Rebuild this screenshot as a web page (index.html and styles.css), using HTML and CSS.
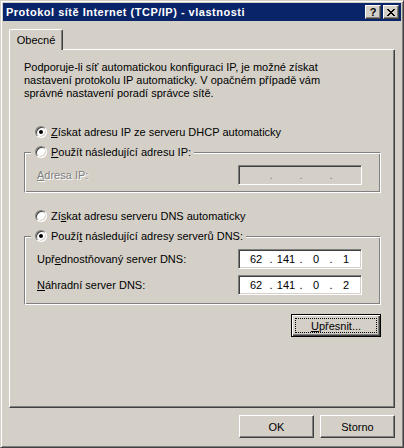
FILE: index.html
```html
<!DOCTYPE html>
<html lang="cs">
<head>
    <meta charset="UTF-8">
    <title>Protokol sítě Internet (TCP/IP) - vlastnosti</title>
    <link rel="stylesheet" href="styles.css">
</head>
<body>
    <div class="window">
        <div class="titlebar">
            <span class="title">Protokol sítě Internet (TCP/IP) - vlastnosti</span>
            <span class="cap-btn help">?</span>
            <span class="cap-btn close">
                <svg width="8" height="7" viewBox="0 0 8 7" shape-rendering="crispEdges">
                    <path d="M0 0h2v1H0zM6 0h2v1H6zM1 1h2v1H1zM5 1h2v1H5zM2 2h4v1H2zM3 3h2v1H3zM2 4h4v1H2zM1 5h2v1H1zM5 5h2v1H5zM0 6h2v1H0zM6 6h2v1H6z" fill="#000"/>
                </svg>
            </span>
        </div>

        <div class="client">
            <!-- Tabs -->
            <div class="tabs">
                <div class="tab">Obecné</div>
                <div class="tab-fill"></div>
            </div>

            <div class="panel">
                <p class="intro">Podporuje-li síť automatickou konfiguraci IP, je možné získat<br>nastavení protokolu IP automaticky. V opačném případě vám<br>správné nastavení poradí správce sítě.</p>

                <div class="option first"><span class="radio checked"></span><span><u>Z</u>ískat adresu IP ze serveru DHCP automaticky</span></div>

                <div class="group">
                    <div class="group-head"><span class="radio"></span><span><u>P</u>oužít následující adresu IP:</span></div>
                    <div class="row">
                        <span class="label disabled"><u>A</u>dresa IP:</span>
                        <span class="ip off">
                            <span class="oct"></span><span class="dot">.</span>
                            <span class="oct"></span><span class="dot">.</span>
                            <span class="oct"></span><span class="dot">.</span>
                            <span class="oct"></span>
                        </span>
                    </div>
                </div>

                <div class="option third"><span class="radio"></span><span>Zí<u>s</u>kat adresu serveru DNS automaticky</span></div>

                <div class="group dns">
                    <div class="group-head"><span class="radio checked"></span><span>Použí<u>t</u> následující adresy serverů DNS:</span></div>
                    <div class="row">
                        <span class="label">Upř<u>e</u>dnostňovaný server DNS:</span>
                        <span class="ip">
                            <span class="oct">62</span><span class="dot">.</span>
                            <span class="oct">141</span><span class="dot">.</span>
                            <span class="oct">0</span><span class="dot">.</span>
                            <span class="oct">1</span>
                        </span>
                    </div>
                    <div class="row second">
                        <span class="label"><u>N</u>áhradní server DNS:</span>
                        <span class="ip">
                            <span class="oct">62</span><span class="dot">.</span>
                            <span class="oct">141</span><span class="dot">.</span>
                            <span class="oct">0</span><span class="dot">.</span>
                            <span class="oct">2</span>
                        </span>
                    </div>
                </div>

                <div class="btn default"><span class="focus"><u>U</u>přesnit...</span></div>
            </div>

            <div class="footer">
                <div class="btn">OK</div>
                <div class="btn">Storno</div>
            </div>
        </div>
    </div>
</body>
</html>
```

FILE: styles.css
```css
body {
    margin: 0;
    font-family: "Liberation Sans", Arial, sans-serif;
    font-size: 11px;
    color: #000;
    background: #d4d0c8;
}

.window {
    width: 404px;
    height: 448px;
    box-sizing: border-box;
    display: flex;
    flex-direction: column;
    padding: 2px;
    background: #d4d0c8;
    border: 1px solid;
    border-color: #d4d0c8 #404040 #404040 #d4d0c8;
    box-shadow: inset 1px 1px #fff, inset -1px -1px #808080;
}

/* Title bar */
.titlebar {
    height: 18px;
    display: flex;
    align-items: center;
    gap: 2px;
    padding: 0 2px 0 3px;
    background: #0a246a;
    color: #fff;
    font-weight: bold;
}

.title {
    flex: 1;
    white-space: nowrap;
    letter-spacing: 0.5px;
}

.cap-btn {
    width: 16px;
    height: 14px;
    box-sizing: border-box;
    display: flex;
    align-items: center;
    justify-content: center;
    background: #d4d0c8;
    color: #000;
    border: 1px solid;
    border-color: #fff #404040 #404040 #fff;
    box-shadow: inset -1px -1px #808080;
}

.cap-btn.help {
    font-size: 11px;
    line-height: 12px;
}

/* Client area */
.client {
    flex: 1;
    display: flex;
    flex-direction: column;
    padding: 8px 6px 7px 6px;
}

.tabs {
    height: 21px;
    display: flex;
    align-items: flex-end;
}

.tab {
    width: 54px;
    height: 21px;
    box-sizing: border-box;
    display: flex;
    align-items: center;
    justify-content: center;
    padding-bottom: 1px;
    border-top: 1px solid #fff;
    border-left: 1px solid #fff;
    border-right: 1px solid #404040;
    border-radius: 2px 2px 0 0;
    box-shadow: inset -1px 0 #808080;
}

.tab-fill {
    flex: 1;
    height: 0;
    border-bottom: 1px solid #fff;
    margin-right: 1px;
}

.panel {
    flex: 1;
    display: flex;
    flex-direction: column;
    padding: 11px 13px 0 14px;
    border-left: 1px solid #fff;
    border-right: 1px solid #404040;
    border-bottom: 1px solid #404040;
    box-shadow: inset -1px -1px #808080;
}

.intro {
    margin: 0;
    line-height: 13px;
}

/* Radio options */
.option,
.group-head {
    height: 13px;
    display: flex;
    align-items: center;
    gap: 4px;
}

.option {
    padding-left: 11px;
}

.option.first {
    margin-top: 25px;
}

.option.third {
    margin-top: 16px;
}

.radio {
    width: 12px;
    height: 12px;
    box-sizing: border-box;
    flex: none;
    display: flex;
    align-items: center;
    justify-content: center;
    border-radius: 50%;
    background: #fff;
    border: 1px solid;
    border-color: #808080 #fff #fff #808080;
    box-shadow: inset 1px 1px #404040, inset -1px -1px #d4d0c8;
}

.radio.checked::after {
    content: "";
    width: 4px;
    height: 4px;
    border-radius: 50%;
    background: #000;
}

/* Group boxes */
.group {
    margin-top: 14px;
    padding: 0 18px 7px 0;
    border: 1px solid;
    border-color: #808080 #fff #fff #808080;
    box-shadow: inset 1px 1px #fff, inset -1px -1px #808080;
}

.group.dns {
    padding-bottom: 9px;
}

.group-head {
    width: fit-content;
    margin: -8px 0 0 6px;
    padding: 0 3px 0 4px;
    background: #d4d0c8;
}

.row {
    display: flex;
    align-items: center;
    justify-content: space-between;
    margin-top: 7px;
    padding-left: 12px;
}

.row.second {
    margin-top: 6px;
}

.label.disabled {
    color: #808080;
    text-shadow: 1px 1px #fff;
}

/* IP address control */
.ip {
    width: 124px;
    height: 20px;
    box-sizing: border-box;
    display: flex;
    align-items: center;
    padding-left: 5px;
    background: #fff;
    border: 1px solid;
    border-color: #808080 #fff #fff #808080;
    box-shadow: inset 1px 1px #404040, inset -1px -1px #d4d0c8;
}

.ip.off {
    background: #d4d0c8;
    color: #808080;
}

.oct {
    width: 24px;
    text-align: center;
}

.dot {
    width: 6px;
    text-align: center;
}

/* Buttons */
.btn {
    width: 75px;
    height: 23px;
    box-sizing: border-box;
    display: flex;
    align-items: center;
    justify-content: center;
    background: #d4d0c8;
    border: 1px solid;
    border-color: #fff #404040 #404040 #fff;
    box-shadow: inset -1px -1px #808080;
}

.btn.default {
    width: 90px;
    align-self: flex-end;
    margin-top: 9px;
    padding: 3px;
    border-color: #000;
    box-shadow: inset 1px 1px #fff, inset -1px -1px #404040, inset -2px -2px #808080;
}

.focus {
    flex: 1;
    align-self: stretch;
    display: flex;
    align-items: center;
    justify-content: center;
    border: 1px dotted #000;
}

.footer {
    display: flex;
    justify-content: flex-end;
    gap: 6px;
    margin-top: 7px;
}
```
